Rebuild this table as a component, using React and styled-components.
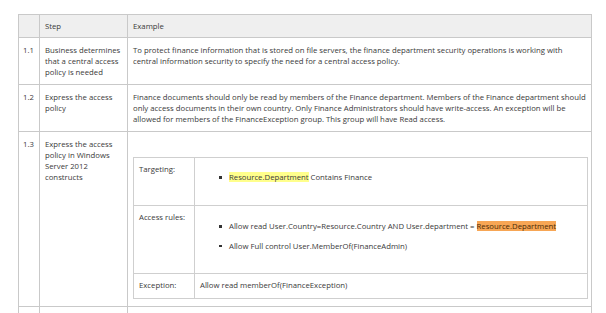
import React from "react";
import styled, { createGlobalStyle } from "styled-components";

const Global = createGlobalStyle`
  html, body {
    margin: 0;
    padding: 0;
    background: #ffffff;
  }
  body {
    font-family: "Open Sans", "Noto Sans", sans-serif;
    color: #3a3a3a;
  }
`;

const Page = styled.div`
  padding: 14px 0 0 18px;
  width: 606px;
  height: 313px;
  box-sizing: border-box;
  overflow: hidden;
`;

const Table = styled.table`
  border-collapse: collapse;
  table-layout: fixed;
  width: 574px;
  font-size: 7.75px;
  line-height: 11px;
`;

const Cell = styled.td`
  border: 1px solid #c9c9c9;
  vertical-align: top;
  padding: ${(p) => (p.$head ? "6px 3px 0 5px" : "7px 3px 0 5px")};
  background: ${(p) => (p.$head ? "#efefef" : "#ffffff")};
  height: ${(p) => p.$h}px;
  box-sizing: border-box;
`;

const Num = styled(Cell)`
  padding-left: 4px;
  padding-right: 0;
`;

const Spacer = styled.div`
  height: 18px;
`;

const Inner = styled.table`
  border-collapse: collapse;
  table-layout: fixed;
  width: 455px;
  margin-bottom: 5px;
`;

const InnerCell = styled.td`
  border: 1px solid #cfcfcf;
  vertical-align: top;
  padding: 6px 5px 0;
  height: ${(p) => p.$h}px;
  box-sizing: border-box;
`;

const List = styled.ul`
  margin: ${(p) => p.$top}px 0 0;
  padding-left: 29px;
  list-style: none;
`;

const Item = styled.li`
  position: relative;
  margin-bottom: 8.5px;
  &::before {
    content: "";
    position: absolute;
    left: -10px;
    top: 4px;
    width: 2.5px;
    height: 2.5px;
    background: #333;
  }
`;

const Mark = styled.span`
  background: ${(p) => (p.$tone === "orange" ? "#f7a655" : "#ffff8c")};
  color: ${(p) => (p.$tone === "orange" ? "#4a2a06" : "inherit")};
`;

export default function App() {
  return (
    <Page>
      <Global />
      <Table>
        <colgroup>
          <col style={{ width: 21 }} />
          <col style={{ width: 88 }} />
          <col />
        </colgroup>
        <tbody>
          <tr>
            <Num $head $h={23}></Num>
            <Cell $head $h={23}>Step</Cell>
            <Cell $head $h={23}>Example</Cell>
          </tr>
          <tr>
            <Num $h={47}>1.1</Num>
            <Cell $h={47}>Business determines that a central access policy is needed</Cell>
            <Cell $h={47}>
              To protect finance information that is stored on file servers, the finance department security operations
              is working with central information security to specify the need for a central access policy.
            </Cell>
          </tr>
          <tr>
            <Num $h={47}>1.2</Num>
            <Cell $h={47}>Express the access policy</Cell>
            <Cell $h={47}>
              Finance documents should only be read by members of the Finance department. Members of the Finance
              department should only access documents in their own country. Only Finance Administrators should have
              write-access. An exception will be allowed for members of the FinanceException group. This group will
              have Read access.
            </Cell>
          </tr>
          <tr>
            <Num $h={175}>1.3</Num>
            <Cell $h={175}>Express the access policy in Windows Server 2012 constructs</Cell>
            <Cell $h={175}>
              <Spacer />
              <Inner>
                <colgroup>
                  <col style={{ width: 61 }} />
                  <col />
                </colgroup>
                <tbody>
                  <tr>
                    <InnerCell $h={48}>Targeting:</InnerCell>
                    <InnerCell $h={48}>
                      <List $top={8}>
                        <Item>
                          <Mark>Resource.Department</Mark> Contains Finance
                        </Item>
                      </List>
                    </InnerCell>
                  </tr>
                  <tr>
                    <InnerCell $h={68}>Access rules:</InnerCell>
                    <InnerCell $h={68}>
                      <List $top={9}>
                        <Item>
                          Allow read User.Country=Resource.Country AND User.department ={" "}
                          <Mark $tone="orange">Resource.Department</Mark>
                        </Item>
                        <Item>Allow Full control User.MemberOf(FinanceAdmin)</Item>
                      </List>
                    </InnerCell>
                  </tr>
                  <tr>
                    <InnerCell $h={25}>Exception:</InnerCell>
                    <InnerCell $h={25}>Allow read memberOf(FinanceException)</InnerCell>
                  </tr>
                </tbody>
              </Inner>
            </Cell>
          </tr>
          <tr>
            <Num $h={30}></Num>
            <Cell $h={30}></Cell>
            <Cell $h={30}></Cell>
          </tr>
        </tbody>
      </Table>
    </Page>
  );
}
